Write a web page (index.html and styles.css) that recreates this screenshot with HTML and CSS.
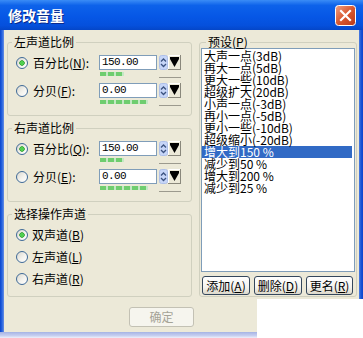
FILE: index.html
```html
<!DOCTYPE html>
<html lang="zh-CN">
<head>
  <meta charset="UTF-8" />
  <title>修改音量</title>
  <link rel="stylesheet" href="styles.css">
</head>
<body>

  <div class="window">
    <div class="titlebar">
      <span class="title">修改音量</span>
      <span class="close">
        <svg width="21" height="21" viewBox="0 0 21 21">
          <defs>
            <linearGradient id="cg" x1="0" y1="0" x2="1" y2="1">
              <stop offset="0" stop-color="#f0a286"/>
              <stop offset="0.5" stop-color="#d9582f"/>
              <stop offset="1" stop-color="#b9381a"/>
            </linearGradient>
          </defs>
          <rect x="0.5" y="0.5" width="20" height="20" rx="3" fill="url(#cg)" stroke="#fff"/>
          <path d="M6 6L15 15M15 6L6 15" stroke="#fff" stroke-width="2.2" stroke-linecap="square"/>
        </svg>
      </span>
    </div>

    <div class="frame">
      <div class="side left-side"></div>
      <div class="content">
        <div class="main">

          <div class="left">
            <div class="group">
              <div class="legend">左声道比例</div>
              <div class="rows">
                <div class="row">
                  <span class="radio checked"></span>
                  <span class="label">百分比(<u>N</u>):</span>
                  <div class="field">
                    <div class="edit-line">
                      <span class="edit">150.00</span>
                      <span class="spin"><svg width="9" height="15" viewBox="0 0 9 15"><rect x="0.5" y="0.5" width="8" height="14" rx="2" fill="#c6d5f7" stroke="#aec0ea"/><path d="M2 6.5L4.5 4L7 6.5M2 9L4.5 11.5L7 9" fill="none" stroke="#3b5280" stroke-width="1.3"/></svg></span>
                      <span class="drop"><svg width="13" height="15" viewBox="0 0 13 15"><path d="M0.5 14.5V0.5H12" fill="none" stroke="#fff"/><path d="M12.5 0V15M0 14.5H13" stroke="#8a887c"/><rect x="2" y="2" width="9" height="2"/><path d="M2 4H11L6.5 12Z"/></svg></span>
                    </div>
                    <div class="meter-line"><span class="meter" style="width:24px"></span><span class="tick"></span></div>
                  </div>
                </div>
                <div class="row">
                  <span class="radio"></span>
                  <span class="label">分贝(<u>F</u>):</span>
                  <div class="field">
                    <div class="edit-line">
                      <span class="edit">0.00</span>
                      <span class="spin"><svg width="9" height="15" viewBox="0 0 9 15"><rect x="0.5" y="0.5" width="8" height="14" rx="2" fill="#c6d5f7" stroke="#aec0ea"/><path d="M2 6.5L4.5 4L7 6.5M2 9L4.5 11.5L7 9" fill="none" stroke="#3b5280" stroke-width="1.3"/></svg></span>
                      <span class="drop"><svg width="13" height="15" viewBox="0 0 13 15"><path d="M0.5 14.5V0.5H12" fill="none" stroke="#fff"/><path d="M12.5 0V15M0 14.5H13" stroke="#8a887c"/><rect x="2" y="2" width="9" height="2"/><path d="M2 4H11L6.5 12Z"/></svg></span>
                    </div>
                    <div class="meter-line"><span class="meter" style="width:48px"></span><span class="tick"></span></div>
                  </div>
                </div>
              </div>
            </div>

            <div class="group">
              <div class="legend">右声道比例</div>
              <div class="rows">
                <div class="row">
                  <span class="radio checked"></span>
                  <span class="label">百分比(<u>Q</u>):</span>
                  <div class="field">
                    <div class="edit-line">
                      <span class="edit">150.00</span>
                      <span class="spin"><svg width="9" height="15" viewBox="0 0 9 15"><rect x="0.5" y="0.5" width="8" height="14" rx="2" fill="#c6d5f7" stroke="#aec0ea"/><path d="M2 6.5L4.5 4L7 6.5M2 9L4.5 11.5L7 9" fill="none" stroke="#3b5280" stroke-width="1.3"/></svg></span>
                      <span class="drop"><svg width="13" height="15" viewBox="0 0 13 15"><path d="M0.5 14.5V0.5H12" fill="none" stroke="#fff"/><path d="M12.5 0V15M0 14.5H13" stroke="#8a887c"/><rect x="2" y="2" width="9" height="2"/><path d="M2 4H11L6.5 12Z"/></svg></span>
                    </div>
                    <div class="meter-line"><span class="meter" style="width:24px"></span><span class="tick"></span></div>
                  </div>
                </div>
                <div class="row">
                  <span class="radio"></span>
                  <span class="label">分贝(<u>E</u>):</span>
                  <div class="field">
                    <div class="edit-line">
                      <span class="edit">0.00</span>
                      <span class="spin"><svg width="9" height="15" viewBox="0 0 9 15"><rect x="0.5" y="0.5" width="8" height="14" rx="2" fill="#c6d5f7" stroke="#aec0ea"/><path d="M2 6.5L4.5 4L7 6.5M2 9L4.5 11.5L7 9" fill="none" stroke="#3b5280" stroke-width="1.3"/></svg></span>
                      <span class="drop"><svg width="13" height="15" viewBox="0 0 13 15"><path d="M0.5 14.5V0.5H12" fill="none" stroke="#fff"/><path d="M12.5 0V15M0 14.5H13" stroke="#8a887c"/><rect x="2" y="2" width="9" height="2"/><path d="M2 4H11L6.5 12Z"/></svg></span>
                    </div>
                    <div class="meter-line"><span class="meter" style="width:48px"></span><span class="tick"></span></div>
                  </div>
                </div>
              </div>
            </div>

            <div class="group">
              <div class="legend">选择操作声道</div>
              <div class="opts">
                <div class="opt"><span class="radio checked"></span><span class="opt-text">双声道(<u>B</u>)</span></div>
                <div class="opt"><span class="radio"></span><span class="opt-text">左声道(<u>L</u>)</span></div>
                <div class="opt"><span class="radio"></span><span class="opt-text">右声道(<u>R</u>)</span></div>
              </div>
            </div>
          </div>

          <div class="group preset">
            <div class="legend preset-legend">预设(<u>P</u>)</div>
            <div class="list">
              <div class="item">大声一点(3dB)</div>
              <div class="item">再大一点(5dB)</div>
              <div class="item">更大一些(10dB)</div>
              <div class="item">超级扩大(20dB)</div>
              <div class="item">小声一点(-3dB)</div>
              <div class="item">再小一点(-5dB)</div>
              <div class="item">更小一些(-10dB)</div>
              <div class="item">超级缩小(-20dB)</div>
              <div class="item sel">增大到150 %</div>
              <div class="item">减少到50 %</div>
              <div class="item">增大到200 %</div>
              <div class="item">减少到25 %</div>
            </div>
            <div class="btns">
              <span class="btn">添加(<u>A</u>)</span>
              <span class="btn">删除(<u>D</u>)</span>
              <span class="btn">更名(<u>R</u>)</span>
            </div>
          </div>

        </div>

        <div class="footer">
          <span class="ok">确定</span>
        </div>
      </div>
      <div class="side right-side"></div>
    </div>

    <div class="bottom-edge"></div>
    <div class="glare"></div>
  </div>

</body>
</html>
```

FILE: styles.css
```css
* {
  margin: 0;
  padding: 0;
  box-sizing: border-box;
}

body {
  width: 363px;
  height: 338px;
  overflow: hidden;
  background: #fff;
  color: #000;
  font-family: "Noto Sans CJK SC", sans-serif;
  font-size: 12px;
}

u {
  text-decoration: underline;
  text-underline-offset: 1px;
}

.window {
  position: relative;
  width: 363px;
  height: 338px;
  display: flex;
  flex-direction: column;
  background: #1d5ad9;
}

.titlebar {
  height: 30px;
  display: flex;
  align-items: center;
  justify-content: space-between;
  padding: 0 7px 0 8px;
  background: linear-gradient(#3a8cf6, #0d62ea 18%, #0657e6 55%, #0550dc 85%, #0446c8);
}

.title {
  color: #fff;
  font-weight: bold;
  font-size: 14px;
  line-height: 16px;
  text-shadow: 1px 1px 0 #0a2a8c;
}

.close {
  width: 21px;
  height: 21px;
}

.frame {
  flex: 1;
  display: flex;
}

.side {
  width: 4px;
}

.left-side {
  background: linear-gradient(90deg, #0a44cc, #2564e0 50%, #6a8fe2);
}

.right-side {
  background: linear-gradient(90deg, #4f7fe0, #1a55d6 50%, #0a44cc);
}

.content {
  flex: 1;
  display: flex;
  flex-direction: column;
  background: #ece9d8;
}

.main {
  display: flex;
  gap: 7px;
  padding: 12px 2px 0 3px;
}

.left {
  width: 185px;
  display: flex;
  flex-direction: column;
  gap: 12px;
}

.group {
  border: 1px solid #d0d0bf;
  border-radius: 3px;
  padding-bottom: 4px;
}

.legend {
  width: max-content;
  height: 12px;
  line-height: 12px;
  margin: -7px 0 0 4px;
  padding: 0 2px;
  background: #ece9d8;
}

.rows {
  padding-top: 7px;
}

.row {
  display: flex;
  height: 28px;
  padding-left: 8px;
}

.radio {
  flex: none;
  width: 12px;
  height: 12px;
  margin-top: 2px;
  border: 1px solid #3f6a98;
  border-radius: 50%;
  background: linear-gradient(135deg, #d9d7ce, #f4f3ee 55%, #fff);
}

.radio.checked {
  background:
    radial-gradient(circle, #50cf50 0 1.6px, #2a9a2a 2.4px, transparent 3px),
    linear-gradient(135deg, #d9d7ce, #f4f3ee 55%, #fff);
}

.label {
  width: 66px;
  margin-left: 5px;
  height: 15px;
  line-height: 15px;
  white-space: nowrap;
}

.field {
  display: flex;
  flex-direction: column;
  width: 82px;
}

.edit-line {
  display: flex;
  height: 15px;
}

.edit {
  width: 58px;
  height: 15px;
  border: 1px solid #7f9db9;
  background: #fff;
  padding-left: 2px;
  font-family: "Liberation Mono", monospace;
  font-size: 11px;
  letter-spacing: -0.6px;
  line-height: 13px;
}

.spin {
  width: 9px;
  height: 15px;
  margin-left: 2px;
}

.drop {
  width: 13px;
  height: 15px;
}

.spin svg,
.drop svg {
  display: block;
}

.meter-line {
  display: flex;
  height: 6px;
  margin-top: 2px;
}

.meter {
  height: 4px;
  margin-left: 1px;
  background: repeating-linear-gradient(90deg, #6fcd6f 0 6px, #c4e8c4 6px 8px);
}

.tick {
  margin-left: auto;
  width: 22px;
  height: 6px;
  border-bottom: 1px solid #9c9a8e;
}

.opts {
  padding-top: 6px;
}

.opt {
  display: flex;
  height: 22px;
  padding-left: 8px;
}

.opt .radio {
  margin-top: 3px;
}

.opt-text {
  margin-left: 4px;
  margin-top: 3px;
  height: 12px;
  line-height: 12px;
}

.preset {
  width: 158px;
  padding: 0 1px 1px;
}

.preset-legend {
  margin-left: 5px;
}

.list {
  height: 224px;
  border: 1px solid #7f9db9;
  background: #fff;
  padding-top: 1px;
  overflow: hidden;
}

.item {
  height: 12px;
  line-height: 12px;
  padding-left: 2px;
  white-space: nowrap;
}

.item.sel {
  margin-right: 2px;
  background: #316ac5;
  color: #fff;
}

.btns {
  display: flex;
  gap: 4px;
  margin: 4px 0 0 1px;
}

.btn {
  width: 48px;
  height: 19px;
  border: 1px solid #34475c;
  border-radius: 3px;
  background: linear-gradient(#fff, #f4f3ee 60%, #dcd8ca);
  text-align: center;
  line-height: 17px;
  white-space: nowrap;
}

.btn:last-child {
  width: 47px;
}

.footer {
  flex: 1;
  padding: 10px 0 0 125px;
}

.ok {
  display: block;
  width: 65px;
  height: 20px;
  border: 1px solid #c3c1b4;
  border-radius: 3px;
  background: #f6f5ee;
  color: #a5a397;
  text-align: center;
  line-height: 18px;
}

.bottom-edge {
  height: 6px;
  background: linear-gradient(#a5b3e4, #c6cff0 60%, #eef0fa);
}

/* washed-out corner in the capture */
.glare {
  position: absolute;
  left: 257px;
  top: 299px;
  right: 0;
  bottom: 0;
  background: #fff;
}
```
